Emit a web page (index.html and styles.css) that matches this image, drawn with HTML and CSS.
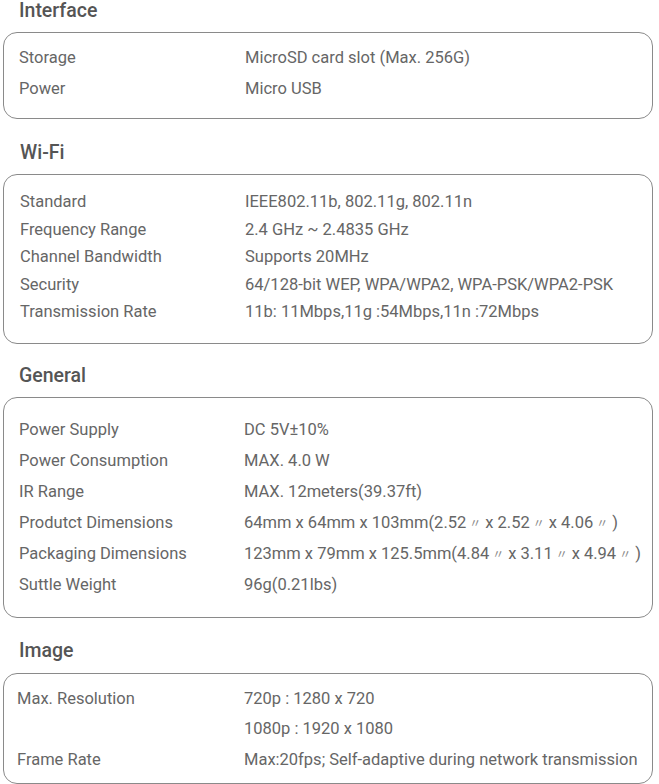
FILE: index.html
```html
<!DOCTYPE html>
<html lang="en">
<head>
<meta charset="utf-8">
<title>Specifications</title>
<link rel="stylesheet" href="styles.css">
</head>
<body>
<main class="page">
  <section class="spec spec--interface">
    <h2 class="spec__title">Interface</h2>
    <div class="spec__box">
      <div class="row"><span class="row__label">Storage</span><span class="row__value">MicroSD card slot (Max. 256G)</span></div>
      <div class="row"><span class="row__label">Power</span><span class="row__value">Micro USB</span></div>
    </div>
  </section>

  <section class="spec spec--wifi">
    <h2 class="spec__title">Wi-Fi</h2>
    <div class="spec__box">
      <div class="row"><span class="row__label">Standard</span><span class="row__value">IEEE802.11b, 802.11g, 802.11n</span></div>
      <div class="row"><span class="row__label">Frequency Range</span><span class="row__value">2.4 GHz ~ 2.4835 GHz</span></div>
      <div class="row"><span class="row__label">Channel Bandwidth</span><span class="row__value">Supports 20MHz</span></div>
      <div class="row"><span class="row__label">Security</span><span class="row__value">64/128-bit WEP, WPA/WPA2, WPA-PSK/WPA2-PSK</span></div>
      <div class="row"><span class="row__label">Transmission Rate</span><span class="row__value">11b: 11Mbps,11g :54Mbps,11n :72Mbps</span></div>
    </div>
  </section>

  <section class="spec spec--general">
    <h2 class="spec__title">General</h2>
    <div class="spec__box">
      <div class="row"><span class="row__label">Power Supply</span><span class="row__value">DC 5V±10%</span></div>
      <div class="row"><span class="row__label">Power Consumption</span><span class="row__value">MAX. 4.0 W</span></div>
      <div class="row"><span class="row__label">IR Range</span><span class="row__value">MAX. 12meters(39.37ft)</span></div>
      <div class="row"><span class="row__label">Produtct Dimensions</span><span class="row__value">64mm x 64mm x 103mm(2.52<span class="mark">〃</span>x 2.52<span class="mark">〃</span>x 4.06<span class="mark">〃</span>)</span></div>
      <div class="row"><span class="row__label">Packaging Dimensions</span><span class="row__value">123mm x 79mm x 125.5mm(4.84<span class="mark">〃</span>x 3.11<span class="mark">〃</span>x 4.94<span class="mark">〃</span>)</span></div>
      <div class="row"><span class="row__label">Suttle Weight</span><span class="row__value">96g(0.21lbs)</span></div>
    </div>
  </section>

  <section class="spec spec--image">
    <h2 class="spec__title">Image</h2>
    <div class="spec__box">
      <div class="row"><span class="row__label">Max. Resolution</span><span class="row__value">720p : 1280 x 720</span></div>
      <div class="row"><span class="row__label"></span><span class="row__value">1080p : 1920 x 1080</span></div>
      <div class="row"><span class="row__label">Frame Rate</span><span class="row__value">Max:20fps; Self-adaptive during network transmission</span></div>
    </div>
  </section>
</main>
</body>
</html>
```

FILE: styles.css
```css
html, body {
  margin: 0;
  padding: 0;
  background: #ffffff;
}

body {
  font-family: Roboto, "Noto Sans", "Liberation Sans", sans-serif;
  color: #666666;
}

.page {
  padding: 0 3px;
  width: 650px;
}

.spec__title {
  margin: 0 0 11px 16px;
  font-size: 19.5px;
  line-height: 21px;
  font-weight: 500;
  color: #555555;
}

.spec__box {
  border: 1px solid #8a8a8a;
  border-radius: 14px;
  padding: 9px 15px 14px 15px;
}

.row {
  display: flex;
  font-size: 16.5px;
  line-height: 31px;
  white-space: nowrap;
}

.row__label {
  flex: 0 0 226px;
}

.row__value {
  flex: 1 1 auto;
}

.mark {
  font-family: "Noto Sans CJK SC", sans-serif;
  font-size: 12px;
  color: #888888;
  padding: 0 4px 0 3px;
}

/* Wi-Fi */
.spec.spec--wifi .spec__title {
  margin-top: 23px;
  margin-left: 17px;
}
.spec--wifi .spec__box {
  padding: 13px 15px 17px 16px;
}
.spec--wifi .row {
  line-height: 27.5px;
}
.spec--wifi .row__label {
  flex-basis: 225px;
}

/* General */
.spec.spec--general .spec__title {
  margin-top: 21px;
}
.spec--general .spec__box {
  padding: 16px 15px 17px 15px;
}
.spec--general .row__label {
  flex-basis: 225px;
}

/* Image */
.spec.spec--image .spec__title {
  margin-top: 22px;
  margin-bottom: 12px;
}
.spec--image .spec__box {
  padding: 10px 15px 8px 13px;
}
.spec--image .row {
  line-height: 30.5px;
}
.spec--image .row__label {
  flex-basis: 227px;
}
```
